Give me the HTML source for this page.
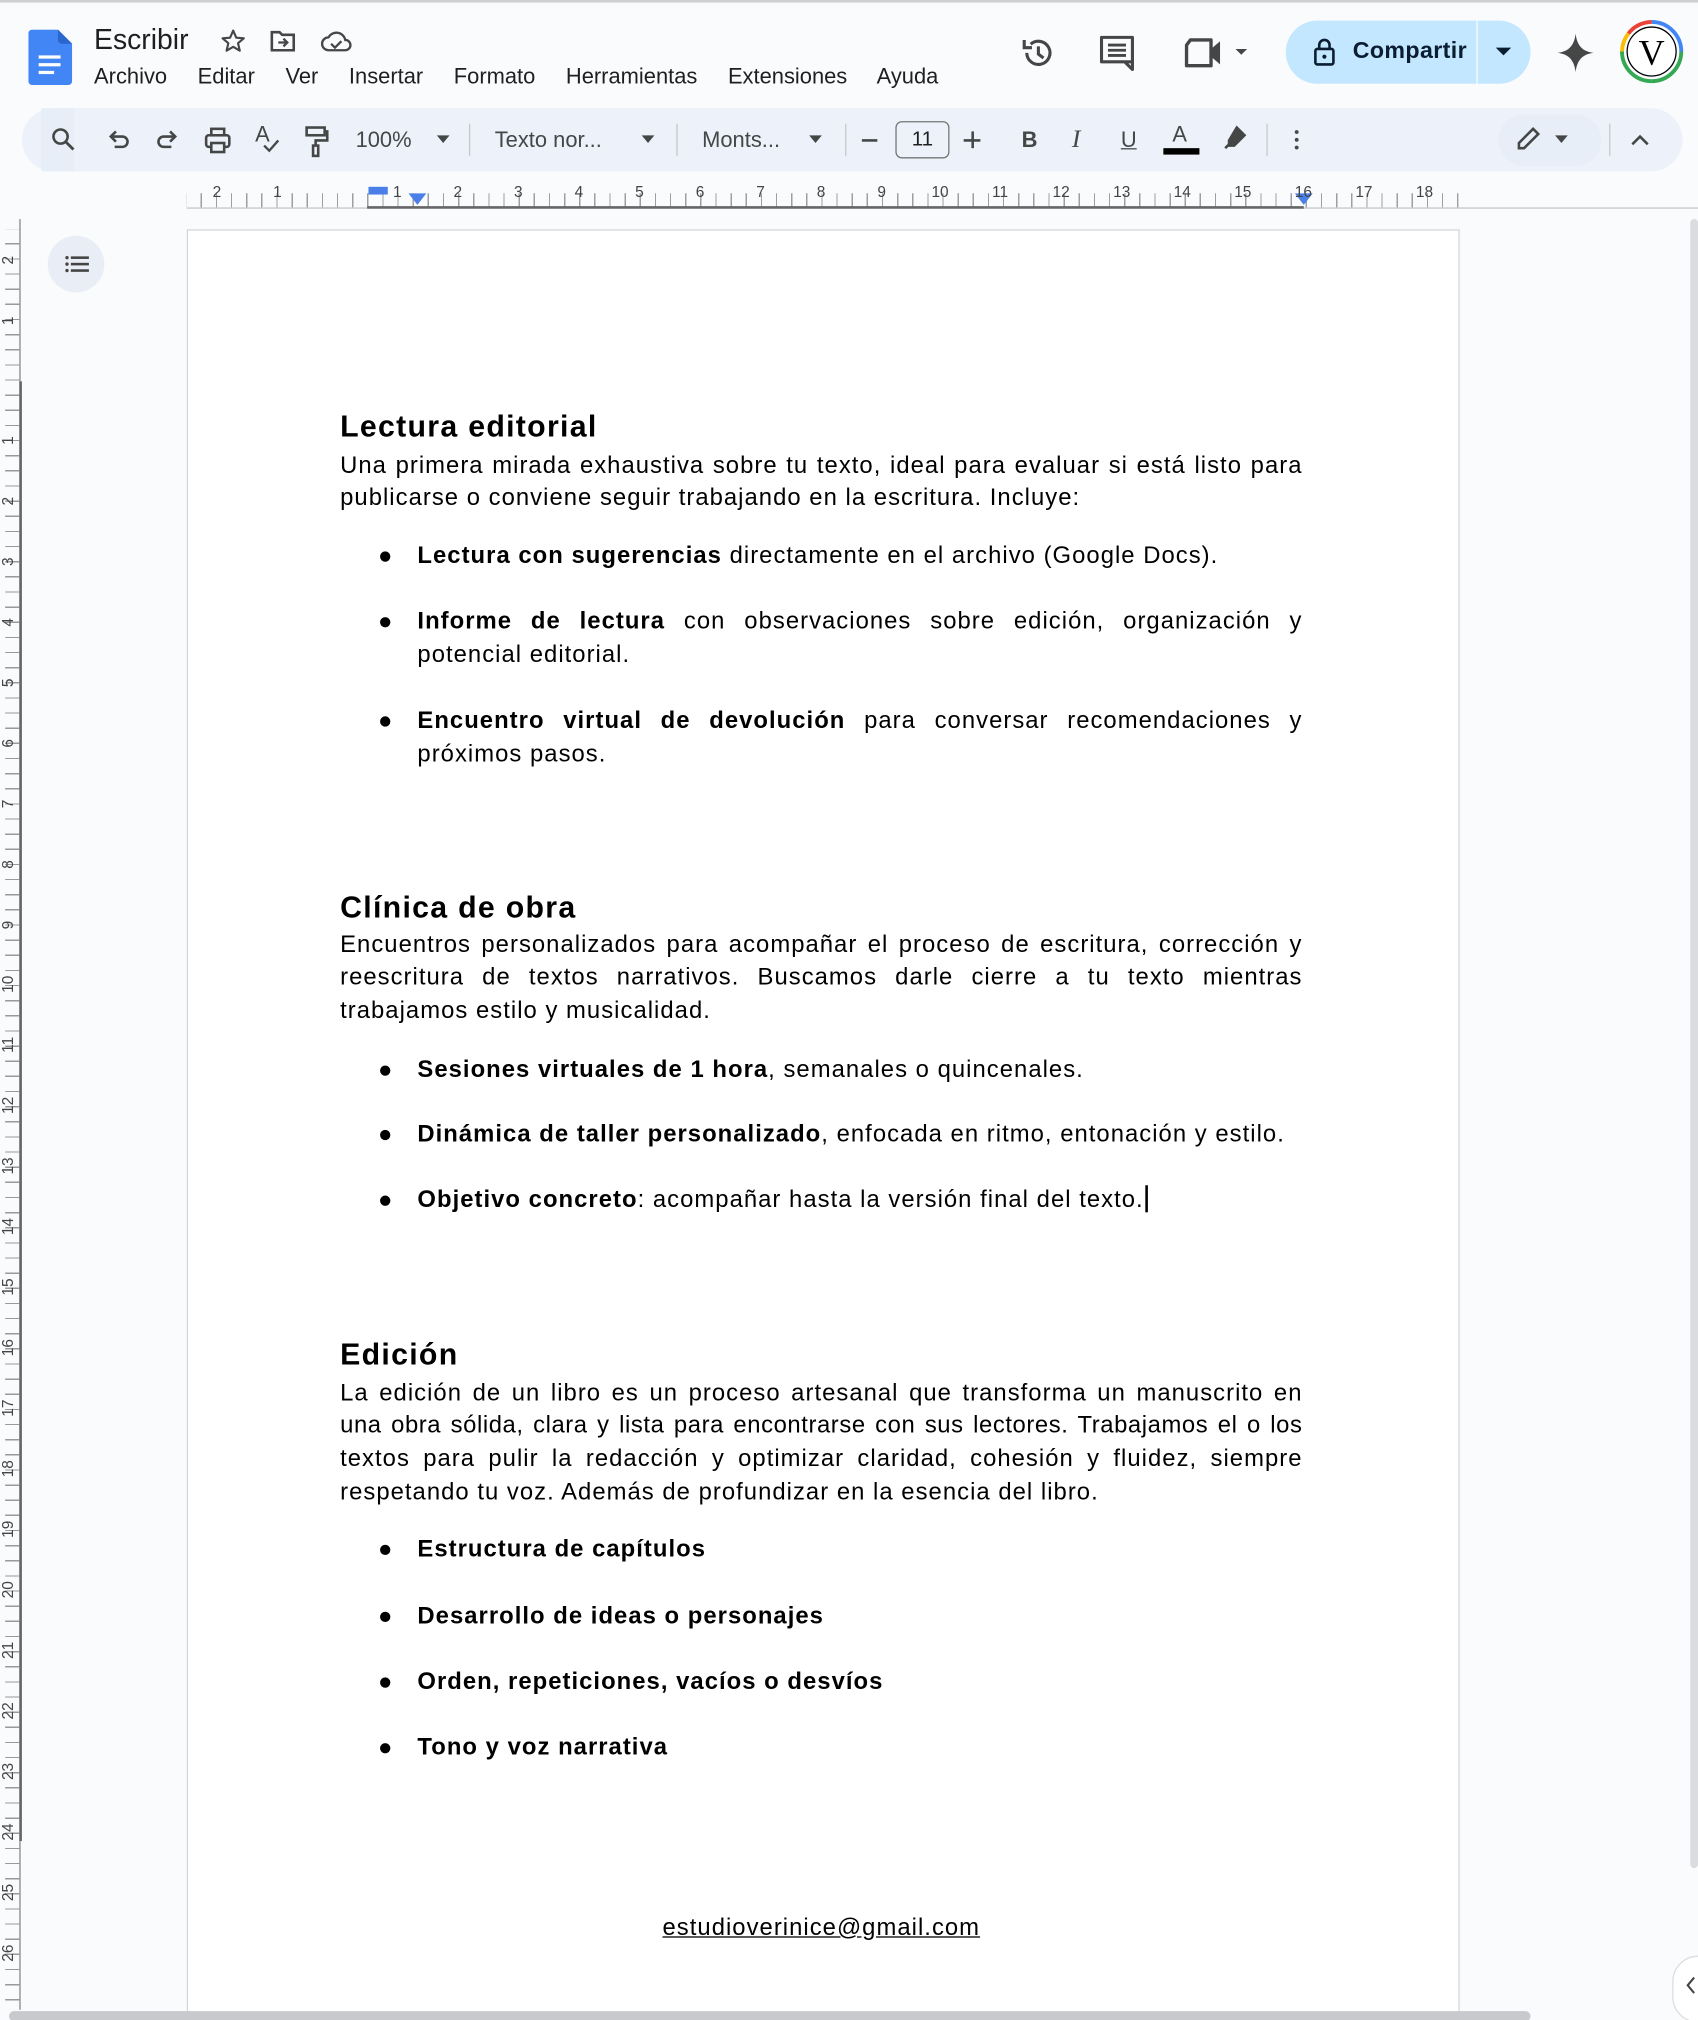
<!DOCTYPE html>
<html><head><meta charset="utf-8">
<style>
html,body{margin:0;padding:0;width:1698px;height:2020px;overflow:hidden;background:#f9fbfd;}
#s{position:absolute;left:0;top:0;width:1318px;height:1568px;transform:scale(1.28832);transform-origin:0 0;font-family:"Liberation Sans",Arial,sans-serif;color:#1f1f1f;background:#f9fbfd;overflow:hidden}
.a{position:absolute}
.menu span{margin-right:19px}
.tb{position:absolute;top:0;height:49px;display:flex;align-items:center;font-size:17px;color:#444746}
.ln{position:absolute;left:264px;width:747px;font-size:18.5px;letter-spacing:.8px;line-height:26px;white-space:nowrap;color:#000}
.j{text-align:justify;text-align-last:justify;white-space:normal}
.bl{left:324px;width:687px}
.dot{position:absolute;left:295px;width:8px;height:8px;border-radius:50%;background:#000}
h2{position:absolute;left:264px;margin:0;font-size:23.5px;font-weight:bold;letter-spacing:1px;color:#000;line-height:30px}
b{font-weight:bold}
.rn{position:absolute;font-size:12px;color:#444;top:142px}
.vn{position:absolute;left:-2px;font-size:12px;color:#444;transform:rotate(-90deg);width:16px;text-align:center}
</style></head><body>
<div id="s">
<div class="a" style="left:0;top:0;width:1318px;height:2px;background:#cfcfcf"></div>
<svg class="a" style="left:22px;top:23px" width="34" height="43" viewBox="0 0 34 43"><path d="M3 0h20l11 11v29a3 3 0 0 1-3 3H3a3 3 0 0 1-3-3V3a3 3 0 0 1 3-3z" fill="#4285f4"/><path d="M23 0l11 11h-8a3 3 0 0 1-3-3z" fill="#2a66cc"/><rect x="8" y="20" width="17" height="2.5" fill="#fff"/><rect x="8" y="26" width="17" height="2.5" fill="#fff"/><rect x="8" y="32" width="12" height="2.5" fill="#fff"/></svg>
<div class="a" style="left:73px;top:18px;font-size:22px;color:#1f1f1f">Escribir</div>
<svg class="a" style="left:170px;top:21px" width="22" height="22" viewBox="0 0 24 24"><path d="M12 3l2.6 6 6.4.5-4.9 4.2 1.5 6.3L12 16.7 6.4 20l1.5-6.3L3 9.5 9.4 9z" fill="none" stroke="#444746" stroke-width="1.8" stroke-linejoin="round"/></svg>
<svg class="a" style="left:209px;top:22px" width="22" height="20" viewBox="0 0 22 20"><path d="M2 3h6l2 2h9v12H2z" fill="none" stroke="#444746" stroke-width="2"/><path d="M7 11h7M11 8l3 3-3 3" fill="none" stroke="#444746" stroke-width="1.8"/></svg>
<svg class="a" style="left:248px;top:22px" width="26" height="20" viewBox="0 0 26 20"><path d="M7 17a5 5 0 0 1 0-10 7 7 0 0 1 13 2 4 4 0 0 1 0 8z" fill="none" stroke="#444746" stroke-width="1.8"/><path d="M9 12l3 3 5-5" fill="none" stroke="#444746" stroke-width="1.8"/></svg>
<div class="a menu" style="left:73px;top:50px;font-size:17px;color:#1f1f1f;white-space:nowrap"><span>Archivo</span> <span>Editar</span> <span>Ver</span> <span>Insertar</span> <span>Formato</span> <span>Herramientas</span> <span>Extensiones</span> <span>Ayuda</span></div>
<svg class="a" style="left:792px;top:27px" width="28" height="28" viewBox="0 0 28 28"><path d="M5 14a9 9 0 1 0 3-6.7" fill="none" stroke="#444746" stroke-width="2.4"/><path d="M3 4v6h6" fill="none" stroke="#444746" stroke-width="2.4"/><path d="M14 9v6l4 3" fill="none" stroke="#444746" stroke-width="2.4"/></svg>
<svg class="a" style="left:853px;top:27px" width="28" height="28" viewBox="0 0 28 28"><path d="M2 2h24v19H2z M20 21l6 6v-6" fill="none" stroke="#444746" stroke-width="2.4" stroke-linejoin="round"/><path d="M7 8h14M7 12h14M7 16h14" stroke="#444746" stroke-width="2.2"/></svg>
<svg class="a" style="left:918px;top:28px" width="54" height="26" viewBox="0 0 54 26"><path d="M6 3h16v20H3V7z" fill="none" stroke="#444746" stroke-width="2.6" stroke-linejoin="round"/><path d="M22 10l7-6v18l-7-6z" fill="#444746"/><path d="M41 10h9l-4.5 4.5z" fill="#444746"/></svg>
<div class="a" style="left:998px;top:16px;width:190px;height:49px;border-radius:25px;background:#c2e7ff"></div>
<div class="a" style="left:1146px;top:16px;width:1px;height:49px;background:#f9fbfd"></div>
<svg class="a" style="left:1018px;top:28px" width="20" height="24" viewBox="0 0 20 24"><rect x="3" y="10" width="14" height="12" rx="1.5" fill="none" stroke="#0b1d30" stroke-width="2"/><path d="M6 10V7a4 4 0 0 1 8 0v3" fill="none" stroke="#0b1d30" stroke-width="2"/><circle cx="10" cy="16" r="1.6" fill="#0b1d30"/></svg>
<div class="a" style="left:1050px;top:29px;font-size:18px;font-weight:bold;color:#0b1d30;letter-spacing:.3px">Compartir</div>
<svg class="a" style="left:1161px;top:36px" width="12" height="8"><path d="M0 1h12L6 7z" fill="#0b1d30"/></svg>
<svg class="a" style="left:1209px;top:26px" width="28" height="30" viewBox="0 0 28 30"><path d="M14 0C15 9 19 14 28 15 19 16 15 21 14 30 13 21 9 16 0 15 9 14 13 9 14 0z" fill="#444746"/></svg>
<svg class="a" style="left:1257px;top:15px" width="50" height="50" viewBox="0 0 50 50"><path d="M25 2a23 23 0 0 1 23 23" stroke="#4285f4" stroke-width="3" fill="none"/><path d="M48 25a23 23 0 0 1-23 23" stroke="#34a853" stroke-width="3" fill="none"/><path d="M25 48A23 23 0 0 1 2 25" stroke="#34a853" stroke-width="3" fill="none"/><path d="M2 25a23 23 0 0 1 5-14" stroke="#fbbc04" stroke-width="3" fill="none"/><path d="M7 11A23 23 0 0 1 25 2" stroke="#ea4335" stroke-width="3" fill="none"/><circle cx="25" cy="25" r="19" fill="#fff" stroke="#000" stroke-width="1"/><text x="25" y="35" text-anchor="middle" font-family="Liberation Serif,serif" font-size="28" fill="#000">V</text></svg>
<div class="a" style="left:17px;top:84px;width:1289px;height:49px;border-radius:25px;background:#edf2fa">
 <div class="a" style="left:15px;top:0;width:26px;height:49px;background:#e8eef7"></div>
 <svg class="a" style="left:22px;top:14px" width="20" height="20" viewBox="0 0 20 20"><circle cx="8" cy="8" r="5.5" fill="none" stroke="#444746" stroke-width="2"/><path d="M12 12l6 6" stroke="#444746" stroke-width="2.2"/></svg>
 <svg class="a" style="left:65px;top:15px" width="20" height="20" viewBox="0 0 20 20"><path d="M5 7h8a4 4 0 0 1 0 8H7" fill="none" stroke="#444746" stroke-width="2"/><path d="M8 3L4 7l4 4" fill="none" stroke="#444746" stroke-width="2"/></svg>
 <svg class="a" style="left:103px;top:15px" width="20" height="20" viewBox="0 0 20 20"><path d="M15 7H7a4 4 0 0 0 0 8h6" fill="none" stroke="#444746" stroke-width="2"/><path d="M12 3l4 4-4 4" fill="none" stroke="#444746" stroke-width="2"/></svg>
 <svg class="a" style="left:141px;top:14px" width="22" height="22" viewBox="0 0 22 22"><rect x="6" y="2" width="10" height="5" fill="none" stroke="#444746" stroke-width="2"/><rect x="2" y="7" width="18" height="9" rx="2" fill="none" stroke="#444746" stroke-width="2"/><rect x="6" y="13" width="10" height="7" fill="#edf2fa" stroke="#444746" stroke-width="2"/></svg>
 <div class="a" style="left:181px;top:11px;font-size:17px;color:#444746">A</div>
 <svg class="a" style="left:186px;top:24px" width="14" height="12"><path d="M2 5l4 4 7-8" fill="none" stroke="#444746" stroke-width="1.8"/></svg>
 <svg class="a" style="left:219px;top:13px" width="20" height="26" viewBox="0 0 20 26"><rect x="2" y="2" width="14" height="6" fill="none" stroke="#444746" stroke-width="2"/><path d="M16 5h2v7H9v4" fill="none" stroke="#444746" stroke-width="2"/><rect x="7" y="16" width="4" height="8" fill="none" stroke="#444746" stroke-width="2"/></svg>
 <div class="tb" style="left:259px">100%</div>
 <svg class="a" style="left:322px;top:21px" width="10" height="6"><path d="M0 0h10L5 6z" fill="#444746"/></svg>
 <div class="a" style="left:347px;top:12px;width:1px;height:25px;background:#c7c7c7"></div>
 <div class="tb" style="left:367px">Texto nor...</div>
 <svg class="a" style="left:481px;top:21px" width="10" height="6"><path d="M0 0h10L5 6z" fill="#444746"/></svg>
 <div class="a" style="left:508px;top:12px;width:1px;height:25px;background:#c7c7c7"></div>
 <div class="tb" style="left:528px">Monts...</div>
 <svg class="a" style="left:611px;top:21px" width="10" height="6"><path d="M0 0h10L5 6z" fill="#444746"/></svg>
 <div class="a" style="left:639px;top:12px;width:1px;height:25px;background:#c7c7c7"></div>
 <div class="a" style="left:652px;top:24px;width:12px;height:2px;background:#444746"></div>
 <div class="a" style="left:678px;top:10px;width:40px;height:27px;border:1px solid #747775;border-radius:5px;text-align:center;line-height:27px;font-size:16px;color:#1f1f1f">11</div>
 <div class="a" style="left:731px;top:24px;width:13px;height:2px;background:#444746"></div>
 <div class="a" style="left:736.5px;top:18px;width:2px;height:13px;background:#444746"></div>
 <div class="tb" style="left:776px;font-weight:bold">B</div>
 <div class="tb" style="left:815px;font-style:italic;font-family:'Liberation Serif',serif;font-size:20px">I</div>
 <div class="tb" style="left:853px;text-decoration:underline">U</div>
 <div class="tb" style="left:893px;top:-4px">A</div>
 <div class="a" style="left:886px;top:31px;width:28px;height:5px;background:#000"></div>
 <svg class="a" style="left:931px;top:13px" width="20" height="20" viewBox="0 0 20 20"><path d="M12 2l6 6-8 8H6v-4z" fill="#444746" stroke="#444746" stroke-width="2"/><path d="M3 18l3-3" stroke="#444746" stroke-width="2"/></svg>
 <div class="a" style="left:966px;top:12px;width:1px;height:25px;background:#c7c7c7"></div>
 <div class="a" style="left:988px;top:17px;width:3px;height:3px;border-radius:50%;background:#444746;box-shadow:0 6px 0 #444746,0 12px 0 #444746"></div>
 <div class="a" style="left:1146px;top:5px;width:80px;height:40px;border-radius:20px;background:#e8eef7"></div>
 <svg class="a" style="left:1159px;top:14px" width="20" height="20" viewBox="0 0 20 20"><path d="M14 2l4 4L7 17H3v-4z" fill="none" stroke="#444746" stroke-width="2"/></svg>
 <svg class="a" style="left:1190px;top:21px" width="10" height="6"><path d="M0 0h10L5 6z" fill="#444746"/></svg>
 <div class="a" style="left:1232px;top:12px;width:1px;height:25px;background:#c7c7c7"></div>
 <svg class="a" style="left:1249px;top:20px" width="14" height="9"><path d="M1 8l6-6 6 6" fill="none" stroke="#444746" stroke-width="2"/></svg>
</div>
<div class="a" style="left:145px;top:150px;width:987px;height:11px;background:repeating-linear-gradient(90deg,transparent 0,transparent 10.75px,#888 10.75px,#888 11.75px);opacity:.8"></div>
<div class="a" style="left:145px;top:161px;width:1173px;height:1px;background:#c7c7c7"></div>
<div class="a" style="left:285px;top:160px;width:727px;height:2px;background:#666"></div>
<div class="a" style="left:286px;top:145px;width:15px;height:6px;background:#4a7fe8"></div>
<svg class="a" style="left:317px;top:150px" width="14" height="10"><path d="M0 0h14L7 9z" fill="#4a7fe8"/></svg>
<svg class="a" style="left:1005px;top:150px" width="14" height="10"><path d="M0 0h14L7 9z" fill="#4a7fe8"/></svg>
<div class="rn" style="left:165px">2</div><div class="rn" style="left:212px">1</div><div class="rn" style="left:305px">1</div>
<div class="rn" style="left:352px">2</div><div class="rn" style="left:399px">3</div><div class="rn" style="left:446px">4</div><div class="rn" style="left:493px">5</div><div class="rn" style="left:540px">6</div><div class="rn" style="left:587px">7</div><div class="rn" style="left:634px">8</div><div class="rn" style="left:681px">9</div><div class="rn" style="left:723px">10</div><div class="rn" style="left:770px">11</div><div class="rn" style="left:817px">12</div><div class="rn" style="left:864px">13</div><div class="rn" style="left:911px">14</div><div class="rn" style="left:958px">15</div><div class="rn" style="left:1005px">16</div><div class="rn" style="left:1052px">17</div><div class="rn" style="left:1099px">18</div>
<div class="a" style="left:15px;top:170px;width:1px;height:1390px;background:#888"></div>
<div class="a" style="left:15px;top:296px;width:2px;height:1133px;background:#666"></div>
<div class="a" style="left:4px;top:178px;width:11px;height:1380px;background:repeating-linear-gradient(180deg,transparent 0,transparent 10.75px,#999 10.75px,#999 11.75px)"></div>
<div class="vn" style="top:195px">2</div><div class="vn" style="top:242px">1</div>
<div class="vn" style="top:335px">1</div><div class="vn" style="top:382px">2</div><div class="vn" style="top:429px">3</div><div class="vn" style="top:476px">4</div><div class="vn" style="top:523px">5</div><div class="vn" style="top:570px">6</div><div class="vn" style="top:617px">7</div><div class="vn" style="top:664px">8</div><div class="vn" style="top:711px">9</div><div class="vn" style="top:757px">10</div><div class="vn" style="top:804px">11</div><div class="vn" style="top:851px">12</div><div class="vn" style="top:898px">13</div><div class="vn" style="top:945px">14</div><div class="vn" style="top:992px">15</div><div class="vn" style="top:1039px">16</div><div class="vn" style="top:1086px">17</div><div class="vn" style="top:1133px">18</div><div class="vn" style="top:1180px">19</div><div class="vn" style="top:1227px">20</div><div class="vn" style="top:1274px">21</div><div class="vn" style="top:1321px">22</div><div class="vn" style="top:1368px">23</div><div class="vn" style="top:1415px">24</div><div class="vn" style="top:1462px">25</div><div class="vn" style="top:1509px">26</div>
<div class="a" style="left:37px;top:183px;width:44px;height:44px;border-radius:50%;background:#e9eef6"></div>
<svg class="a" style="left:50px;top:198px" width="20" height="14"><circle cx="2" cy="2" r="1.3" fill="#444"/><circle cx="2" cy="7" r="1.3" fill="#444"/><circle cx="2" cy="12" r="1.3" fill="#444"/><rect x="5" y="1" width="14" height="2" fill="#444"/><rect x="5" y="6" width="14" height="2" fill="#444"/><rect x="5" y="11" width="14" height="2" fill="#444"/></svg>
<div class="a" style="left:145px;top:178px;width:986px;height:1400px;background:#fff;border:1px solid #d6d6d6"></div>
<div class="a" style="left:1312px;top:170px;width:6px;height:1280px;border-radius:3px;background:#dadce0"></div>
<div class="a" style="left:7px;top:1561px;width:1181px;height:8px;border-radius:4px;background:#c8c9cc"></div>
<div class="a" style="left:1298px;top:1518px;width:40px;height:50px;border-radius:20px;background:#fff;border:1px solid #ddd"></div>
<svg class="a" style="left:1308px;top:1534px" width="8" height="14"><path d="M7 1L2 7l5 6" fill="none" stroke="#444" stroke-width="1.6"/></svg>

<h2 style="top:316px">Lectura editorial</h2>
<div class="ln j" style="top:348px">Una primera mirada exhaustiva sobre tu texto, ideal para evaluar si está listo para</div>
<div class="ln" style="top:373px">publicarse o conviene seguir trabajando en la escritura. Incluye:</div>
<div class="dot" style="top:428px"></div>
<div class="ln bl" style="top:418px"><b>Lectura con sugerencias</b> directamente en el archivo (Google Docs).</div>
<div class="dot" style="top:479px"></div>
<div class="ln bl j" style="top:469px"><b>Informe de lectura</b> con observaciones sobre edición, organización y</div>
<div class="ln bl" style="top:495px">potencial editorial.</div>
<div class="dot" style="top:556px"></div>
<div class="ln bl j" style="top:546px"><b>Encuentro virtual de devolución</b> para conversar recomendaciones y</div>
<div class="ln bl" style="top:572px">próximos pasos.</div>

<h2 style="top:689px">Clínica de obra</h2>
<div class="ln j" style="top:720px">Encuentros personalizados para acompañar el proceso de escritura, corrección y</div>
<div class="ln j" style="top:745px">reescritura de textos narrativos. Buscamos darle cierre a tu texto mientras</div>
<div class="ln" style="top:771px">trabajamos estilo y musicalidad.</div>
<div class="dot" style="top:827px"></div>
<div class="ln bl" style="top:817px"><b>Sesiones virtuales de 1 hora</b>, semanales o quincenales.</div>
<div class="dot" style="top:877px"></div>
<div class="ln bl" style="top:867px"><b>Dinámica de taller personalizado</b>, enfocada en ritmo, entonación y estilo.</div>
<div class="dot" style="top:928px"></div>
<div class="ln bl" style="top:918px"><b>Objetivo concreto</b>: acompañar hasta la versión final del texto.<span style="display:inline-block;width:2px;height:21px;background:#000;vertical-align:-4px;margin-left:1px"></span></div>

<h2 style="top:1036px">Edición</h2>
<div class="ln j" style="top:1068px">La edición de un libro es un proceso artesanal que transforma un manuscrito en</div>
<div class="ln j" style="top:1093px;letter-spacing:.45px">una obra sólida, clara y lista para encontrarse con sus lectores. Trabajamos el o los</div>
<div class="ln j" style="top:1119px">textos para pulir la redacción y optimizar claridad, cohesión y fluidez, siempre</div>
<div class="ln" style="top:1145px">respetando tu voz. Además de profundizar en la esencia del libro.</div>
<div class="dot" style="top:1199px"></div>
<div class="ln bl" style="top:1189px"><b>Estructura de capítulos</b></div>
<div class="dot" style="top:1251px"></div>
<div class="ln bl" style="top:1241px"><b>Desarrollo de ideas o personajes</b></div>
<div class="dot" style="top:1302px"></div>
<div class="ln bl" style="top:1292px"><b>Orden, repeticiones, vacíos o desvíos</b></div>
<div class="dot" style="top:1353px"></div>
<div class="ln bl" style="top:1343px"><b>Tono y voz narrativa</b></div>

<div class="ln" style="top:1483px;text-align:center"><span style="text-decoration:underline">estudioverinice@gmail.com</span></div>
</div>
</body></html>
